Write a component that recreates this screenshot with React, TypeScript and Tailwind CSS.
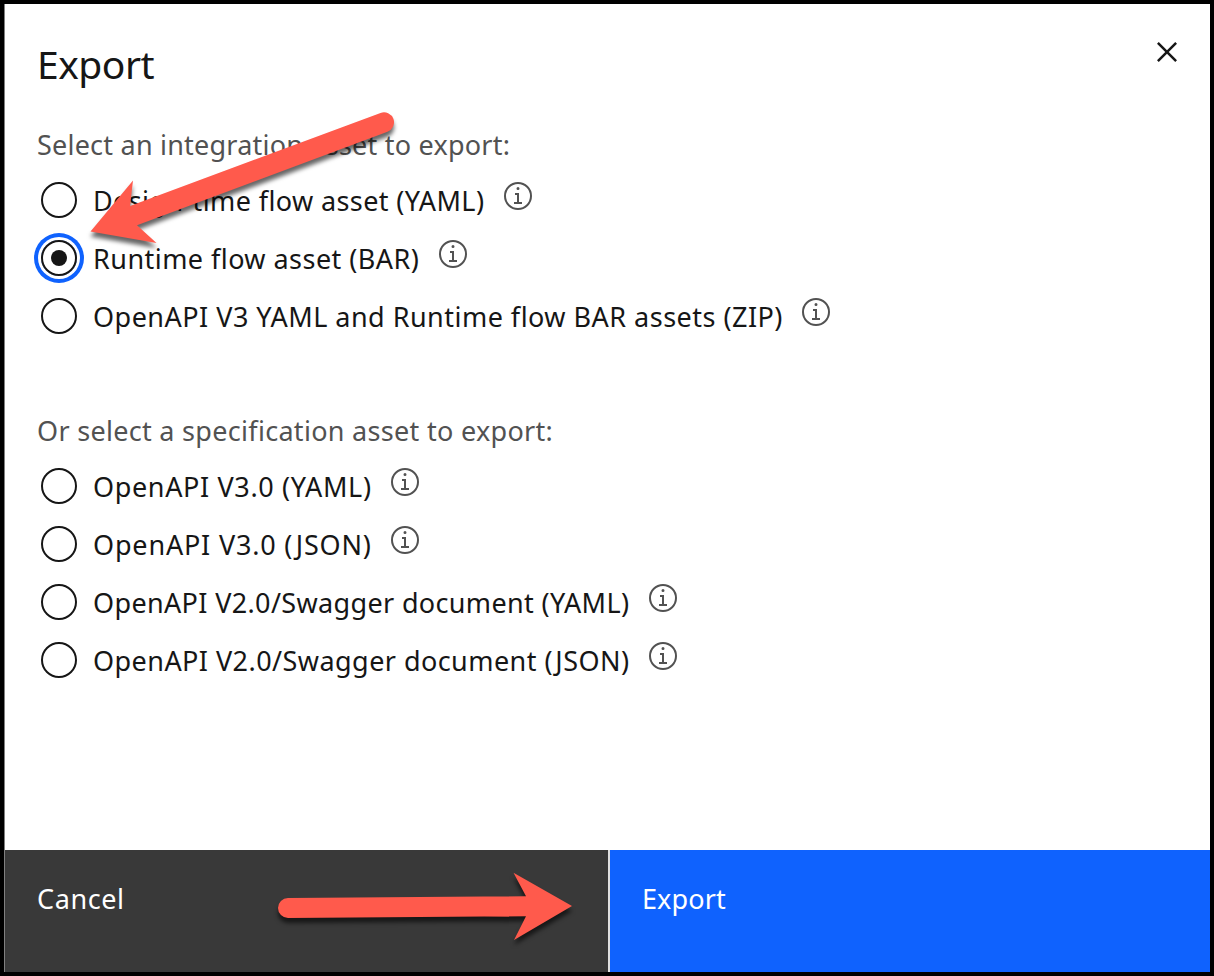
import { useState } from "react";

type Option = { id: string; label: string; fit: string };

const integrationAssets: Option[] = [
  { id: "design", label: "Design-time flow asset (YAML)", fit: "w-[391px] tracking-[0.39px]" },
  { id: "runtime", label: "Runtime flow asset (BAR)", fit: "w-[326px] tracking-[0.45px]" },
  { id: "zip", label: "OpenAPI V3 YAML and Runtime flow BAR assets (ZIP)", fit: "w-[689px] tracking-[0.48px]" },
];

const specificationAssets: Option[] = [
  { id: "v3-yaml", label: "OpenAPI V3.0 (YAML)", fit: "w-[278px] tracking-[0.64px]" },
  { id: "v3-json", label: "OpenAPI V3.0 (JSON)", fit: "w-[278px] tracking-[0.82px]" },
  { id: "v2-yaml", label: "OpenAPI V2.0/Swagger document (YAML)", fit: "w-[536px] tracking-[0.35px]" },
  { id: "v2-json", label: "OpenAPI V2.0/Swagger document (JSON)", fit: "w-[536px] tracking-[0.445px]" },
];

function InfoIcon() {
  return (
    <svg viewBox="0 0 32 32" className="mb-2 ml-[18px] size-8 shrink-0 fill-[#525252]" aria-hidden="true">
      <path d="M17 22V13H13v2h2v7H12v2h8V22zM16 7a1.5 1.5 0 1 0 1.5 1.5A1.5 1.5 0 0 0 16 7z" />
      <path d="M16 30A14 14 0 1 1 30 16 14 14 0 0 1 16 30ZM16 4A12 12 0 1 0 28 16 12 12 0 0 0 16 4Z" />
    </svg>
  );
}

function CloseIcon() {
  return (
    <svg viewBox="0 0 32 32" className="size-10 fill-[#161616]" aria-hidden="true">
      <path d="M17.4141 16 24 9.4141 22.5859 8 16 14.5859 9.4143 8 8 9.4141 14.5859 16 8 22.5859 9.4143 24 16 17.4141 22.5859 24 24 22.5859z" />
    </svg>
  );
}

function RadioRow({ option, checked, onSelect }: { option: Option; checked: boolean; onSelect: () => void }) {
  return (
    <div className="flex h-[58px] items-center">
      <button
        type="button"
        role="radio"
        aria-checked={checked}
        onClick={onSelect}
        className="flex items-center text-left outline-none"
      >
        <span
          className={
            checked
              ? "ml-1 flex size-9 items-center justify-center rounded-full border-2 border-[#161616] ring-4 ring-[#0f62fe] ring-offset-[3px] ring-offset-white"
              : "ml-1 flex size-9 items-center justify-center rounded-full border-2 border-[#161616]"
          }
        >
          {checked && <span className="size-4 rounded-full bg-[#161616]" />}
        </span>
        <span className={`ml-4 pt-px whitespace-nowrap text-[27px] leading-9 text-[#161616] ${option.fit}`}>
          {option.label}
        </span>
      </button>
      <InfoIcon />
    </div>
  );
}

function Arrows() {
  return (
    <svg
      viewBox="0 0 1214 976"
      className="pointer-events-none absolute inset-0 h-[976px] w-[1214px] fill-[#ff5a4c] drop-shadow-[0_5px_2px_rgba(0,0,0,0.6)]"
      aria-hidden="true"
    >
      <path d="M90.5 231.5 133 180.5 130 206 380.5 112.9A10 10 0 0 1 387.5 131.7L137 225.3 156.5 243Z" />
      <path d="M572 906 513.5 872.7 526 896.2 288 898A10 10 0 0 0 288 918L526 916.3 514 940Z" />
    </svg>
  );
}

export default function App() {
  const [selected, setSelected] = useState("runtime");
  const rows = (options: Option[]) =>
    options.map((option) => (
      <RadioRow
        key={option.id}
        option={option}
        checked={selected === option.id}
        onSelect={() => setSelected(option.id)}
      />
    ));

  return (
    <div className="relative h-[976px] w-[1214px] border-4 border-black bg-white font-['Noto_Sans',sans-serif]">
      <div className="flex h-full flex-col border-l border-[#808080]">
        <header className="flex h-[120px] justify-between pr-[23px] pl-8">
          <h1 className="pt-[34px] text-[39px] leading-[52px] tracking-[-0.5px] text-[#161616]">Export</h1>
          <button type="button" aria-label="Close" className="mt-7 size-10">
            <CloseIcon />
          </button>
        </header>
        <main className="flex flex-1 flex-col pl-8">
          <h2 className="pt-[3px] text-[27px] leading-9 tracking-[0.22px] text-[#525252]">
            Select an integration asset to export:
          </h2>
          <div role="radiogroup" className="mt-2">{rows(integrationAssets)}</div>
          <h2 className="mt-[68px] text-[27px] leading-9 tracking-[0.3px] text-[#525252]">
            Or select a specification asset to export:
          </h2>
          <div role="radiogroup" className="mt-2">{rows(specificationAssets)}</div>
        </main>
        <footer className="flex h-[122px] text-[27px] leading-9 text-white">
          <button type="button" className="flex w-[603px] items-start bg-[#393939] pt-[31px] pl-8 tracking-[0.6px]">
            Cancel
          </button>
          <button
            type="button"
            className="flex flex-1 items-start border-l-2 border-[#e0e0e0] bg-[#0f62fe] pt-[31px] pl-8 tracking-[0.1px]"
          >
            Export
          </button>
        </footer>
      </div>
      <div className="absolute -top-1 -left-1">
        <Arrows />
      </div>
    </div>
  );
}
